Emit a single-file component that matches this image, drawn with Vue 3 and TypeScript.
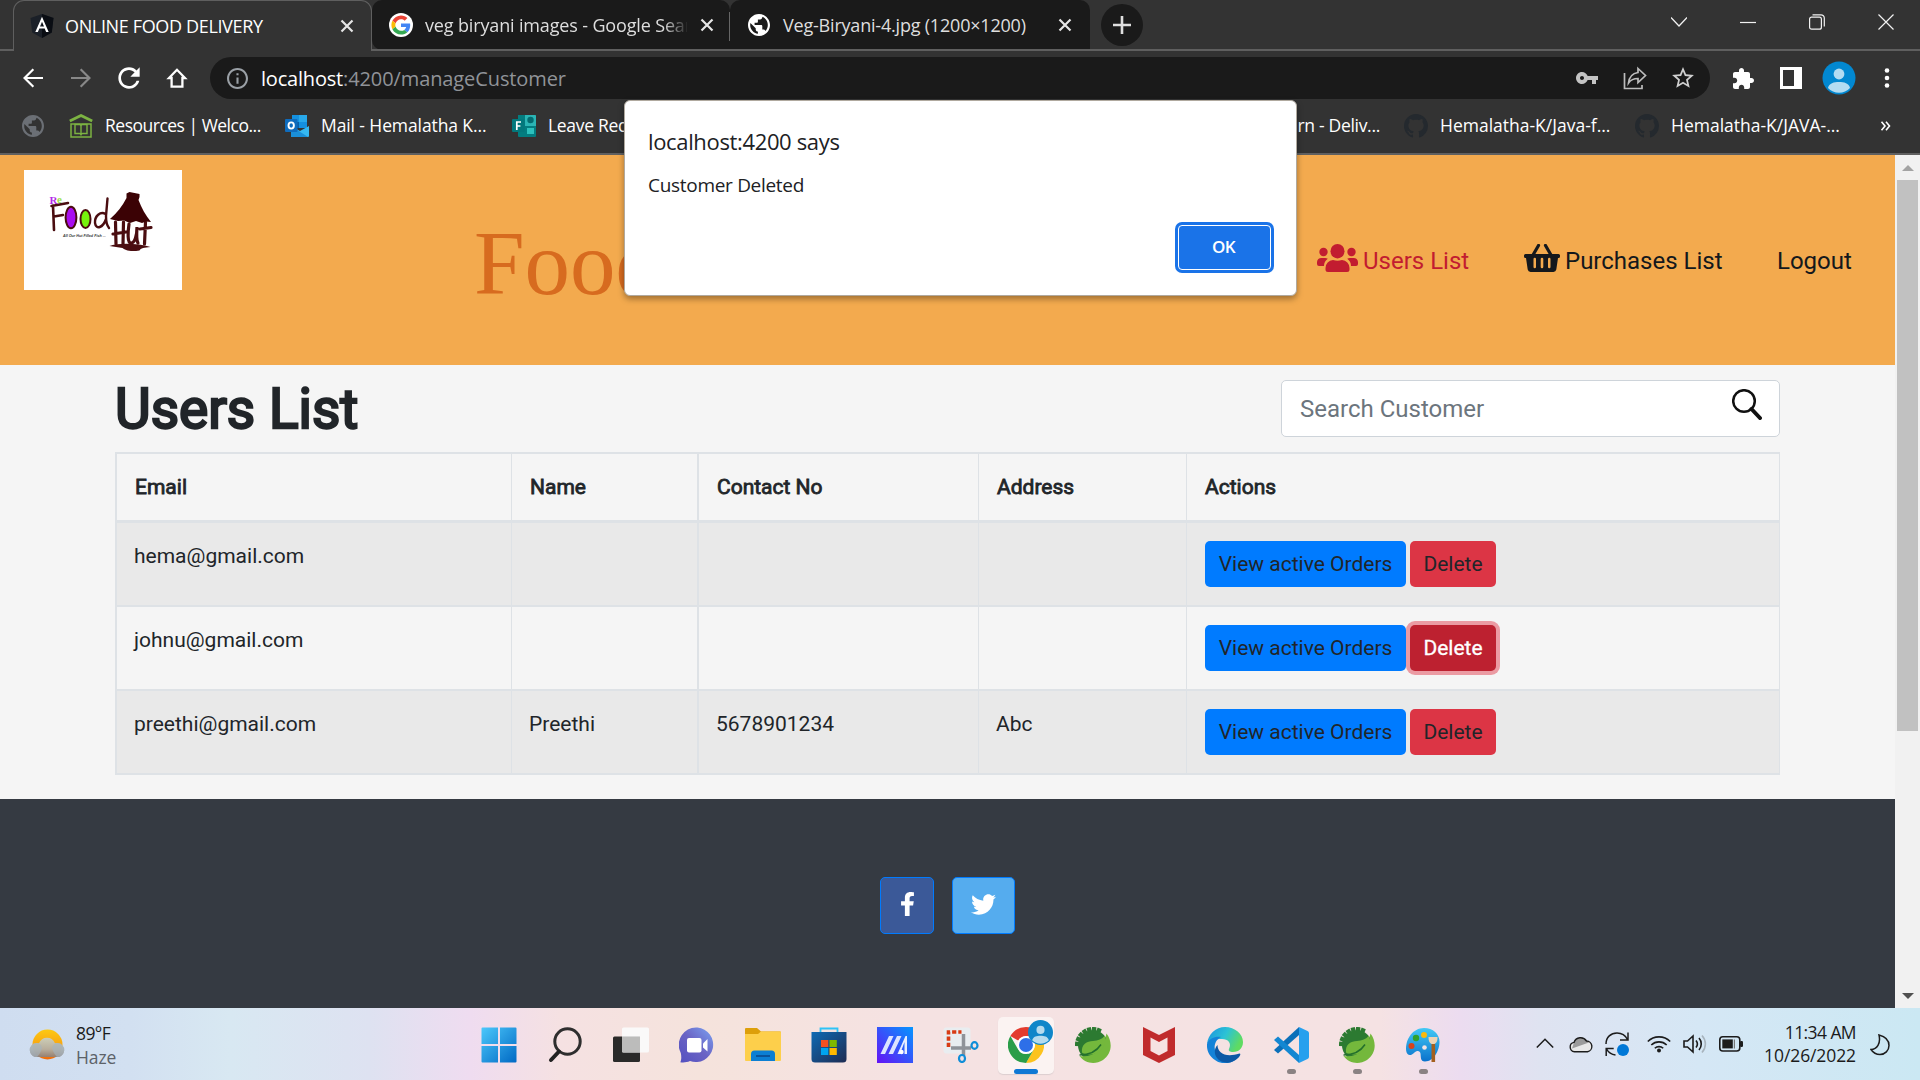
<script setup lang="ts">
interface Customer {
  email: string
  name: string
  contact: string
  address: string
  focused?: boolean
}

const columns: string[] = ['Email', 'Name', 'Contact No', 'Address', 'Actions']

const customers: Customer[] = [
  { email: 'hema@gmail.com', name: '', contact: '', address: '' },
  { email: 'johnu@gmail.com', name: '', contact: '', address: '', focused: true },
  { email: 'preethi@gmail.com', name: 'Preethi', contact: '5678901234', address: 'Abc' },
]

const globe =
  'M12 2C6.48 2 2 6.48 2 12s4.48 10 10 10 10-4.48 10-10S17.52 2 12 2zm-1 17.93c-3.95-.49-7-3.85-7-7.93 0-.62.08-1.21.21-1.79L9 15v1c0 1.1.9 2 2 2v1.93zm6.9-2.54c-.26-.81-1-1.39-1.9-1.39h-1v-3c0-.55-.45-1-1-1H8v-2h2c.55 0 1-.45 1-1V7h2c1.1 0 2-.9 2-2v-.41c2.93 1.19 5 4.06 5 7.41 0 2.08-.8 3.97-2.1 5.39z'
const github =
  'M8 0C3.58 0 0 3.58 0 8c0 3.54 2.29 6.53 5.47 7.59.4.07.55-.17.55-.38 0-.19-.01-.82-.01-1.49-2.01.37-2.53-.49-2.69-.94-.09-.23-.48-.94-.82-1.13-.28-.15-.68-.52-.01-.53.63-.01 1.08.58 1.23.82.72 1.21 1.87.87 2.33.66.07-.52.28-.87.51-1.07-1.78-.2-3.64-.89-3.64-3.95 0-.87.31-1.59.82-2.15-.08-.2-.36-1.02.08-2.12 0 0 .67-.21 2.2.82.64-.18 1.32-.27 2-.27s1.36.09 2 .27c1.53-1.04 2.2-.82 2.2-.82.44 1.1.16 1.92.08 2.12.51.56.82 1.27.82 2.15 0 3.07-1.87 3.75-3.65 3.95.29.25.54.73.54 1.48 0 1.07-.01 1.93-.01 2.2 0 .21.15.46.55.38A8.01 8.01 0 0 0 16 8c0-4.42-3.58-8-8-8z'
const teeth: number[] = [-86, -68, -50, -32, -14, 4, 22]
</script>

<template>
  <div class="screen">
    <!-- Tab strip -->
    <div class="tabs">
      <div class="tab active">
        <svg class="fav" viewBox="0 0 24 24"><path d="M12 0 23.5 4 21.8 18.5 12 24 2.2 18.5.5 4z" fill="#1b2028" /><path d="M12 0 23.5 4 21.8 18.5 12 24z" fill="#0a0d13" /><path d="M12 2.8 5.3 18h2.6l1.4-3.4h5.4L16.1 18h2.6zm0 5 2 4.8h-4z" fill="#fff" /></svg>
        <span class="tab-title t1">ONLINE FOOD DELIVERY</span>
        <svg class="x" viewBox="0 0 14 14"><path d="M1.5 1.5l11 11M12.5 1.5l-11 11" /></svg>
      </div>
      <div class="tab idle second">
        <svg class="fav" viewBox="0 0 24 24">
          <circle cx="12" cy="12" r="12" fill="#fff" />
          <g transform="translate(2.4 2.4) scale(.4)">
            <path fill="#EA4335" d="M24 9.5c3.54 0 6.71 1.22 9.21 3.6l6.85-6.85C35.9 2.38 30.47 0 24 0 14.62 0 6.51 5.38 2.56 13.22l7.98 6.19C12.43 13.72 17.74 9.5 24 9.5z" />
            <path fill="#4285F4" d="M46.98 24.55c0-1.57-.15-3.09-.38-4.55H24v9.02h12.94c-.58 2.96-2.26 5.48-4.78 7.18l7.73 6c4.51-4.18 7.09-10.36 7.09-17.65z" />
            <path fill="#FBBC05" d="M10.53 28.59c-.48-1.45-.76-2.99-.76-4.59s.27-3.14.76-4.59l-7.98-6.19C.92 16.46 0 20.12 0 24c0 3.88.92 7.54 2.56 10.78l7.97-6.19z" />
            <path fill="#34A853" d="M24 48c6.48 0 11.93-2.13 15.89-5.81l-7.73-6c-2.15 1.45-4.92 2.3-8.16 2.3-6.26 0-11.57-4.22-13.47-9.91l-7.98 6.19C6.51 42.62 14.62 48 24 48z" />
          </g>
        </svg>
        <span class="tab-title t2">veg biryani images - Google Sear</span>
        <svg class="x" viewBox="0 0 14 14"><path d="M1.5 1.5l11 11M12.5 1.5l-11 11" /></svg>
      </div>
      <div class="tab idle third">
        <svg class="fav" viewBox="0 0 24 24"><path :d="globe" fill="#fff" transform="translate(-1.2 -1.2) scale(1.1)" /></svg>
        <span class="tab-title t3">Veg-Biryani-4.jpg (1200×1200)</span>
        <svg class="x" viewBox="0 0 14 14"><path d="M1.5 1.5l11 11M12.5 1.5l-11 11" /></svg>
      </div>
      <div class="newtab"><svg viewBox="0 0 18 18"><path d="M9 0v18M0 9h18" stroke="#dedede" stroke-width="2.6" /></svg></div>
      <div class="win">
        <svg viewBox="0 0 16 16"><path d="M0 3.5l8 8.5 8-8.5" /></svg>
        <svg viewBox="0 0 16 16"><path d="M0 8.5h16" /></svg>
        <svg viewBox="0 0 16 16"><rect x=".6" y="3.2" width="11.8" height="12" rx="2" /><path d="M3.5 .8h8.5a3.3 3.3 0 0 1 3.3 3.3v8.4" /></svg>
        <svg viewBox="0 0 16 16"><path d="M.5.5l15 15M15.5.5l-15 15" /></svg>
      </div>
    </div>

    <!-- Address bar -->
    <div class="toolbar">
      <svg class="nav-i" viewBox="0 0 24 24"><path fill="#fff" d="M22 10.9H6.1l7-7L11.6 2.4 2 12l9.6 9.6 1.5-1.5-7-7H22z" /></svg>
      <svg class="nav-i" viewBox="0 0 24 24"><path fill="#888" d="M2 10.9h15.9l-7-7 1.5-1.5L22 12l-9.6 9.6-1.5-1.5 7-7H2z" /></svg>
      <svg class="nav-i" viewBox="3 3 18 18"><path fill="#fff" d="M17.65 6.35C16.2 4.9 14.21 4 12 4c-4.42 0-7.99 3.58-7.99 8s3.57 8 7.99 8c3.73 0 6.84-2.55 7.73-6h-2.08c-.82 2.33-3.04 4-5.65 4-3.31 0-6-2.69-6-6s2.69-6 6-6c1.66 0 3.14.69 4.22 1.78L13 11h7V4l-2.35 2.35z" /></svg>
      <svg class="nav-i" viewBox="0 0 24 24"><path fill="none" stroke="#fff" stroke-width="2.3" d="M12 3.8 4 12h2.6v8.6h10.8V12H20z" /></svg>
      <div class="omni">
        <svg class="info" viewBox="2 2 20 20"><path fill="#9aa0a6" d="M11 17h2v-6h-2v6zm1-15C6.48 2 2 6.48 2 12s4.48 10 10 10 10-4.48 10-10S17.52 2 12 2zm0 18c-4.41 0-8-3.59-8-8s3.59-8 8-8 8 3.59 8 8-3.59 8-8 8zM11 9h2V7h-2v2z" /></svg>
        <span class="url"><b>localhost</b>:4200/manageCustomer</span>
        <div class="omni-icons">
          <svg viewBox="0 0 24 24"><path fill="#c4c4c4" d="M12.65 10C11.83 7.67 9.61 6 7 6c-3.31 0-6 2.69-6 6s2.69 6 6 6c2.61 0 4.83-1.67 5.65-4H17v4h4v-4h2v-4H12.65zM7 14c-1.1 0-2-.9-2-2s.9-2 2-2 2 .9 2 2-.9 2-2 2z" /></svg>
          <svg viewBox="0 0 24 24"><path fill="none" stroke="#bdbdbd" stroke-width="1.7" d="M1.5 7v15.500H19V19M15 2.500l7.500 7-7.500 7v-4c-4 0-7 1-9.500 4.500.6-5.500 3.500-9.500 9.500-10.500z" /></svg>
          <svg viewBox="1 1 22 22"><path fill="#d0d0d0" d="M22 9.24l-7.19-.62L12 2 9.19 8.63 2 9.24l5.46 4.73L5.82 21 12 17.27 18.18 21l-1.63-7.03L22 9.24zM12 15.4l-3.76 2.27 1-4.28-3.32-2.88 4.38-.38L12 6.1l1.71 4.04 4.38.38-3.32 2.88 1 4.28L12 15.4z" /></svg>
        </div>
      </div>
      <svg class="ext" viewBox="1 0 23 23"><path fill="#fff" d="M20.5 11H19V7c0-1.1-.9-2-2-2h-4V3.5C13 2.12 11.88 1 10.5 1S8 2.12 8 3.5V5H4c-1.1 0-1.99.9-1.99 2v3.8H3.5c1.49 0 2.7 1.21 2.7 2.7s-1.21 2.7-2.7 2.7H2V20c0 1.1.9 2 2 2h3.8v-1.5c0-1.49 1.21-2.7 2.7-2.7 1.49 0 2.7 1.21 2.7 2.7V22H17c1.1 0 2-.9 2-2v-4h1.5c1.38 0 2.5-1.12 2.5-2.5S21.88 11 20.5 11z" /></svg>
      <svg class="panel" viewBox="0 0 22 22"><path fill="#fff" fill-rule="evenodd" d="M0 0h22v22H0zM3 3v16h11V3z" /></svg>
      <svg class="avatar" viewBox="0 0 34 34"><circle cx="17" cy="17" r="16.5" fill="#0288d1" /><circle cx="17" cy="13" r="5.4" fill="#b3dcf2" /><path d="M6 27c1-5 6-6 11-6s10 1 11 6a15 15 0 0 1-22 0z" fill="#b3dcf2" /></svg>
      <svg class="dots" viewBox="0 0 6 20" fill="#fff"><circle cx="3" cy="2.5" r="2.3" /><circle cx="3" cy="10" r="2.3" /><circle cx="3" cy="17.5" r="2.3" /></svg>
    </div>

    <!-- Bookmarks -->
    <div class="marks">
      <svg class="m-globe" viewBox="2 2 20 20"><path :d="globe" fill="#6b6f75" /></svg>
      <svg class="m-res" viewBox="0 0 24 24" fill="none" stroke="#7cb342"><path d="M.8 7 12 1.5 23.2 7" stroke-width="2.8" /><path d="M2 10v13h20V10z" stroke-width="1.5" /><path d="M6 10.500v9h4.500c1 0 1.500.7 1.500 2 0-1.300.5-2 1.500-2H18v-9h-4.500c-1 0-1.500.5-1.500 1.500 0-1-.5-1.500-1.500-1.500zM12 11.500v10" stroke-width="1.400" /></svg>
      <span class="mark r1">Resources | Welco...</span>
      <svg class="m-app" viewBox="0 0 24 24"><path d="M7 1h14a1 1 0 0 1 1 1v12H7z" fill="#1490df" /><path d="M14 1h8v7h-8z" fill="#28a8ea" /><path d="M7 8h7v6H7z" fill="#0a5ea8" /><path d="M6 12l9 5 9-5v10a1 1 0 0 1-1 1H7a1 1 0 0 1-1-1z" fill="#35b8f1" /><path d="M6 12l17 11H7a1 1 0 0 1-1-1z" fill="#1a8fd8" /><rect y="5" width="12.5" height="13" rx="1" fill="#0f6cbd" /><ellipse cx="6.2" cy="11.5" rx="2.7" ry="3.1" fill="none" stroke="#fff" stroke-width="1.9" /></svg>
      <span class="mark r2">Mail - Hemalatha K...</span>
      <svg class="m-app" viewBox="0 0 24 24"><path d="M6 1h17a1 1 0 0 1 1 1v20a1 1 0 0 1-1 1H7a1 1 0 0 1-1-1z" fill="#037d80" /><path d="M13 1h10a1 1 0 0 1 1 1v10H13z" fill="#2bb5b5" /><circle cx="18.5" cy="6" r="3.2" fill="#036c70" /><rect x="15" y="14" width="7" height="6" fill="#2cc1bd" /><rect y="5" width="12.5" height="13" rx="1" fill="#03787c" /><path d="M4.8 16V8H9M4.8 12h3.6" fill="none" stroke="#fff" stroke-width="1.7" /></svg>
      <span class="mark r3">Leave Req</span>
      <span class="mark r4">Learn - Deliv...</span>
      <svg class="m-git" viewBox="0 0 16 16"><path :d="github" fill="#24292e" /></svg>
      <span class="mark r5">Hemalatha-K/Java-f...</span>
      <svg class="m-git" viewBox="0 0 16 16"><path :d="github" fill="#24292e" /></svg>
      <span class="mark r6">Hemalatha-K/JAVA-...</span>
      <svg class="m-more" viewBox="0 0 10 10"><path d="M1 .8 4.5 5 1 9.2M5.5.8 9 5 5.5 9.2" fill="none" stroke="#fff" stroke-width="1.6" /></svg>
    </div>

    <!-- Page viewport -->
    <div class="viewport">
      <div class="page">
        <header class="header">
          <div class="logo">
            <svg viewBox="0 0 158 120">
              <text x="25.500" y="34" class="lg-s" fill="#b32be8">R</text>
              <text x="33" y="32.500" class="lg-s" fill="#9be34b">e</text>
              <g fill="none" stroke="#4a0d10" stroke-linecap="round">
                <path d="M29 35.500 30 60M27.500 36l16.500-3M30 46.500l9-1.500" stroke-width="2.600" />
                <ellipse cx="47" cy="47.500" rx="5.400" ry="10.800" fill="#a80df0" stroke-width="2" />
                <ellipse cx="61.500" cy="49" rx="5" ry="9" fill="#76f20c" stroke-width="2" />
                <path d="M81.500 44c-5-3-11 2-10.500 9 1 7 8 5 11-4M83.500 28.500 82 46c0 5 .5 9 3 12" stroke-width="2.400" />
                <path d="M91.500 52l.5 22M99.500 52l-.5 22M89 64l13-2M105 54c-1 7-2 19 2 19s6-8 6-16c-.5 8-.5 14 1 16M121.500 52l-1 22M116 59l11-1.500" stroke-width="3.200" />
              </g>
              <path d="M102.500 23.500l3-1.500 10 2v3l-1 3c3 8 7 15 12.500 22l-5-.5-4 1.500-6-2-6 2-6-2.500-6 .5-8-2c7-6 12.500-13 16.500-21z" fill="#3b0205" />
              <path d="M85.500 76c8-3 28-3 41 1-6 .5-10 1-11 3.500-10 1.500-15-.5-17-2.500z" fill="#4a0d10" />
              <text x="39" y="67" class="lg-t" fill="#333">All Our Hut Filled Fish ...</text>
            </svg>
          </div>
          <h2 class="brand">Food</h2>
          <nav class="menu">
            <a class="link red">
              <svg class="users" viewBox="0 0 41 28" fill="#c21c30"><ellipse cx="20.5" cy="7.2" rx="7" ry="7.2" /><circle cx="6.5" cy="8" r="4.2" /><circle cx="34.5" cy="8" r="4.2" /><path d="M0 20v-2a4.500 4.500 0 0 1 4.500-4H8a5 5 0 0 1 2.800.8A9 9 0 0 0 7 22H2a2 2 0 0 1-2-2zM41 20v-2a4.500 4.500 0 0 0-4.500-4H33a5 5 0 0 0-2.800.8A9 9 0 0 1 34 22h5a2 2 0 0 0 2-2zM8.500 24a8 8 0 0 1 7.500-8c3 1 6 1 9 0a8 8 0 0 1 7.500 8v1.500A2.500 2.500 0 0 1 30 28H11a2.500 2.500 0 0 1-2.500-2.500z" /></svg>
              <span class="n1">Users List</span>
            </a>
            <a class="link">
              <svg class="basket" viewBox="0 0 36 28"><path d="M9 11 14.500 1.500M27 11 21.500 1.500" stroke="#14181c" stroke-width="3.200" stroke-linecap="round" /><path fill="#14181c" fill-rule="evenodd" d="M1.500 10h33A1.500 1.500 0 0 1 36 11.500v1a1.500 1.500 0 0 1-1.500 1.500H34l-1.700 11.600A3 3 0 0 1 29.400 28H6.600a3 3 0 0 1-2.900-2.400L2 14h-.5A1.500 1.500 0 0 1 0 12.500v-1A1.500 1.500 0 0 1 1.500 10zM9.500 15v8a1 1 0 0 0 2.500 0v-8a1 1 0 0 0-2.500 0zM16.700 15v8a1 1 0 0 0 2.600 0v-8a1 1 0 0 0-2.600 0zM24 15v8a1 1 0 0 0 2.500 0v-8a1 1 0 0 0-2.500 0z" /></svg>
              <span class="n2">Purchases List</span>
            </a>
            <a class="link"><span class="n3">Logout</span></a>
          </nav>
        </header>

        <main class="main">
          <div class="top">
            <h1 class="title">Users List</h1>
            <div class="search">
              <span class="ph">Search Customer</span>
              <svg viewBox="0 0 30 31"><ellipse cx="12" cy="12" rx="10.8" ry="10.8" fill="none" stroke="#111" stroke-width="2.5" /><path d="M19.500 20l8.500 9" stroke="#111" stroke-width="4" stroke-linecap="round" /></svg>
            </div>
          </div>
          <div class="table">
            <div class="row head">
              <div v-for="c in columns" :key="c" class="cell"><span>{{ c }}</span></div>
            </div>
            <div v-for="(u, i) in customers" :key="u.email" class="row body" :class="{ odd: i % 2 === 0 }">
              <div class="cell">{{ u.email }}</div>
              <div class="cell">{{ u.name }}</div>
              <div class="cell">{{ u.contact }}</div>
              <div class="cell">{{ u.address }}</div>
              <div class="cell actions">
                <button class="btn view">View active Orders</button>
                <button class="btn del" :class="{ focused: u.focused }">Delete</button>
              </div>
            </div>
          </div>
        </main>

        <footer class="footer">
          <div class="soc fb"><svg viewBox="0 0 320 512"><path fill="#fff" d="M279.14 288l14.22-92.66h-88.91v-60.13c0-25.35 12.42-50.06 52.24-50.06h40.42V6.26S260.43 0 225.36 0c-73.22 0-121.08 44.38-121.08 124.72v70.62H22.89V288h81.39v224h100.17V288z" /></svg></div>
          <div class="soc tw"><svg viewBox="0 0 512 512"><path fill="#fff" d="M459.37 151.716c.325 4.548.325 9.097.325 13.645 0 138.72-105.583 298.558-298.558 298.558-59.452 0-114.68-17.219-161.137-47.106 8.447.974 16.568 1.299 25.34 1.299 49.055 0 94.213-16.568 130.274-44.832-46.132-.975-84.792-31.188-98.112-72.772 6.498.974 12.995 1.624 19.818 1.624 9.421 0 18.843-1.3 27.614-3.573-48.081-9.747-84.143-51.98-84.143-102.985v-1.299c13.969 7.797 30.214 12.67 47.431 13.319-28.264-18.843-46.781-51.005-46.781-87.391 0-19.492 5.197-37.36 14.294-52.954 51.655 63.675 129.3 105.258 216.365 109.807-1.624-7.797-2.599-15.918-2.599-24.04 0-57.828 46.782-104.934 104.934-104.934 30.213 0 57.502 12.67 76.67 33.137 23.715-4.548 46.456-13.32 66.599-25.34-7.798 24.366-24.366 44.833-46.132 57.827 21.117-2.273 41.584-8.122 60.426-16.243-14.292 20.791-32.161 39.308-52.628 54.253z" /></svg></div>
        </footer>
      </div>
      <div class="scroll">
        <svg class="arr" viewBox="0 0 12 6"><path d="M6 0l6 6H0z" fill="#a3a3a3" /></svg>
        <div class="thumb"></div>
        <svg class="arr down" viewBox="0 0 12 6"><path d="M6 6l6-6H0z" fill="#505050" /></svg>
      </div>
    </div>

    <!-- Windows taskbar -->
    <div class="taskbar">
      <div class="weather">
        <svg viewBox="0 0 36 32">
          <defs>
            <linearGradient id="sun" x1="0" y1="0" x2="0" y2="1"><stop offset="0" stop-color="#fdc912" /><stop offset=".6" stop-color="#f7a012" /><stop offset="1" stop-color="#ee6a0c" /></linearGradient>
            <linearGradient id="cld" x1="0" y1="0" x2="0" y2="1"><stop offset="0" stop-color="#c9cfc4" /><stop offset=".6" stop-color="#b3afa6" /><stop offset="1" stop-color="#8f8078" /></linearGradient>
          </defs>
          <circle cx="18.500" cy="15.500" r="15" fill="url(#sun)" />
          <path d="M8 28a7 7 0 0 1-.5-14c.8-.1 1.500 0 2.500.3a8.500 8.500 0 0 1 16 0c1-.3 1.700-.4 2.500-.3a7 7 0 0 1-.5 14z" fill="url(#cld)" opacity=".93" />
          <path d="M8 28a7 7 0 0 1-.5-14c3 0 5 2 5.500 5-1 4-3 7-5 9zM28 28a7 7 0 0 0 .5-14c-3 0-5 2-5.500 5 1 4 3 7 5 9z" fill="#a3b4c0" opacity=".6" />
        </svg>
        <div class="wx"><span>89°F</span><span class="haze">Haze</span></div>
      </div>

      <div class="apps">
        <div class="app">
          <svg viewBox="0 0 36 36"><defs><linearGradient id="wn" x1="0" y1="0" x2="1" y2="1"><stop offset="0" stop-color="#4cc8fb" /><stop offset="1" stop-color="#0069c4" /></linearGradient></defs><path fill="url(#wn)" d="M1.500.5H17v16.500H.5V1.500a1 1 0 0 1 1-1zM19 .5h15.500a1 1 0 0 1 1 1V17H19zM.5 19H17v16.500H1.500a1 1 0 0 1-1-1zM19 19h16.500v15.500a1 1 0 0 1-1 1H19z" /></svg>
        </div>
        <div class="app">
          <svg viewBox="0 0 36 36"><circle cx="20.500" cy="14.500" r="12.700" fill="none" stroke="#2e2e2e" stroke-width="3" /><path d="M12 24.500 4 33" stroke="#222" stroke-width="4" stroke-linecap="round" /></svg>
        </div>
        <div class="app">
          <svg viewBox="0 0 36 36"><rect y="9.500" width="27" height="25.500" rx="1.500" fill="#2a2a29" /><rect x="9" y=".5" width="27" height="25" rx="1.500" fill="#fafafa" opacity=".95" /><path d="M9 9.500h18v16H10.500a1.500 1.500 0 0 1-1.500-1.500z" fill="#bcbcbb" /></svg>
        </div>
        <div class="app">
          <svg viewBox="0 0 36 36"><defs><linearGradient id="ch" x1="0" y1="1" x2="1" y2="0"><stop offset="0" stop-color="#5350c0" /><stop offset=".5" stop-color="#6a63c4" /><stop offset="1" stop-color="#7ba3f2" /></linearGradient></defs><path d="M18.500.5A17.300 17.300 0 1 1 11 34c-3 1.500-7 1.700-9.700 1.200C2.500 33 2.500 29 1.800 26A17.500 17.500 0 0 1 18.500.5z" fill="url(#ch)" /><rect x="8" y="11" width="14.500" height="14.500" rx="2" fill="#fff" /><path d="M24 16.500 28.500 12v12.500L24 20.500z" fill="#fff" /></svg>
        </div>
        <div class="app">
          <svg viewBox="0 0 36 36"><path d="M0 2a1 1 0 0 1 1-1h11l4 3.500H35a1 1 0 0 1 1 1V12H0z" fill="#dd9f0a" /><path d="M0 7h13l3-2.500h19a1 1 0 0 1 1 1V33a1 1 0 0 1-1 1H1a1 1 0 0 1-1-1z" fill="#fdcf4b" /><path d="M6 34V27a3.500 3.500 0 0 1 3.500-3.500h17A3.500 3.500 0 0 1 30 27v7z" fill="#0c7fd3" /><path d="M11 29h14" stroke="#0b4f93" stroke-width="1.800" /></svg>
        </div>
        <div class="app">
          <svg viewBox="0 0 36 36"><defs><linearGradient id="st" x1="0" y1="0" x2="1" y2="1"><stop offset="0" stop-color="#0f6ab4" /><stop offset="1" stop-color="#1e2c52" /></linearGradient></defs><path d="M9.500 7V1.500h17V7" fill="none" stroke="#2ec3f6" stroke-width="1.800" /><path d="M.5 5h35v27a3.500 3.500 0 0 1-3.500 3.500H4A3.500 3.500 0 0 1 .5 32z" fill="url(#st)" /><path fill="#f25022" d="M10 13h7.300v7H10z" /><path fill="#7fba00" d="M18.500 13h7.300v7h-7.300z" /><path fill="#00a4ef" d="M10 21h7.300v7H10z" /><path fill="#ffb900" d="M18.500 21h7.300v7h-7.300z" /></svg>
        </div>
        <div class="app">
          <svg viewBox="0 0 36 36"><defs><linearGradient id="my" x1="0" y1="1" x2="1" y2="0"><stop offset="0" stop-color="#6412f5" /><stop offset="1" stop-color="#0596ff" /></linearGradient></defs><path d="M0 0h36v36H0z" fill="url(#my)" /><path d="M3.500 27 12 9h4.500L8 27zM11.500 27 20 9h4.500L16 27z" fill="#dbe4ff" /><path d="M20.500 27 28.500 9H30v18h-2.500V15L23 27z" fill="#e8eeff" /><circle cx="24.500" cy="25" r="2.200" fill="#fff" /></svg>
        </div>
        <div class="app">
          <svg viewBox="0 0 36 36"><rect x=".5" y=".5" width="27" height="26" rx="3" fill="#e9edf0" /><path d="M5.500 20V5h13" fill="none" stroke="#d83b14" stroke-width="3.600" stroke-dasharray="4.200 2" /><path d="M20.500 7v22M8 21h20" stroke="#8f9399" stroke-width="3.500" /><ellipse cx="19" cy="31.500" rx="3" ry="3.500" fill="none" stroke="#0f8ed8" stroke-width="2.200" /><ellipse cx="31.500" cy="18.500" rx="3" ry="3.300" fill="none" stroke="#0f8ed8" stroke-width="2.200" /></svg>
        </div>
        <div class="app current">
          <svg viewBox="0 0 36 36"><path fill="#e33b2e" d="M18 0a18 18 0 0 1 15.600 9H18a9 9 0 0 0-7.800 4.500L2.400 9A18 18 0 0 1 18 0z" /><path fill="#fcc31e" d="M33.600 9A18 18 0 0 1 18 36l7.800-13.500A9 9 0 0 0 25.800 13.500L24 9z" /><path fill="#2a9d49" d="M2.400 9l7.800 13.500A9 9 0 0 0 20 26.800L18 36A18 18 0 0 1 2.400 9z" /><path fill="#2a9d49" d="M18 27a9 9 0 0 0 7.800-4.500L18 36z" /><circle cx="18" cy="18" r="8.800" fill="#fff" /><circle cx="18" cy="18" r="7" fill="#2d6fe8" /></svg>
          <svg class="badge" viewBox="0 0 24 24"><circle cx="12" cy="12" r="12" fill="#0f86c9" /><circle cx="12" cy="9.500" r="3.900" fill="#b5dbee" /><path d="M4 19.500c1-4 4.500-4.500 8-4.500s7 .5 8 4.500a11.500 11.500 0 0 1-16 0z" fill="#b5dbee" /></svg>
          <i class="pill"></i>
        </div>
        <div class="app">
          <svg viewBox="0 0 36 36"><rect v-for="a in teeth" :key="a" x="15.800" y="0" width="4.400" height="6" fill="#2c7a31" :transform="`rotate(${a} 18 18)`" /><circle cx="18" cy="18.300" r="15" fill="#2c7a31" /><path d="M31.500 6.500C38 15 37 27 28 33c-8 5-18 3.500-23.500-4C18 31 29 23 31.500 6.500z" fill="#74b83c" /><path d="M30 8.500c2 12-6 20-17.500 19-2.500-.2-4.500-1-5.500-2C6 17 12 14.500 18 14c5-.5 9-1.500 12-5.500z" fill="#74b83c" /><path d="M4.500 28c9 0 17-3.500 21.500-10.500" fill="none" stroke="#23702c" stroke-width="1.500" /></svg>
        </div>
        <div class="app">
          <svg viewBox="0 0 36 36"><path d="M2 0l16 8 16-8v28l-16 8-16-8z" fill="#c02b2c" /><path d="M9.500 10.500 18 15l8.500-4.500V24L18 28.500 9.500 24z" fill="#f6e2e2" /></svg>
        </div>
        <div class="app">
          <svg viewBox="0 0 36 36"><defs><linearGradient id="ed" x1="0" y1="0" x2="1" y2=".4"><stop offset="0" stop-color="#1a8fe0" /><stop offset=".55" stop-color="#2cc3d5" /><stop offset="1" stop-color="#5fdb62" /></linearGradient></defs><path d="M0 17C1 7 9 0 18 0c10 0 18 7 18 15 0 6-4 10-10 10-3 0-5-1-4-3 3-6-1-10-7-10C8 12 2 14 0 17z" fill="url(#ed)" /><path d="M0 17c2-6 9-8 14-7-6 3-8 10-5 16 4 7 13 9 20 6-6 6-16 5-21 1C2 29-.5 23 0 17z" fill="#1482d8" /><path d="M10.500 18c0 8 8 13 22 8.500 1 0 1 1 .5 2C28 37 15 38 10 31c-3-4-3-9 .5-13z" fill="#0c58a5" /></svg>
        </div>
        <div class="app">
          <svg viewBox="0 0 36 36"><path d="M26 0v8L5 26.500 1 23z" fill="#0b70b9" /><path d="M26 36v-8L5 9.500 1 13z" fill="#1387d2" /><path d="M26 0l8.500 4A2.500 2.500 0 0 1 36 6v24a2.500 2.500 0 0 1-1.500 2L26 36z" fill="#27a0ee" /></svg>
          <i class="dot"></i>
        </div>
        <div class="app">
          <svg viewBox="0 0 36 36"><rect v-for="a in teeth" :key="a" x="15.800" y="0" width="4.400" height="6" fill="#2c7a31" :transform="`rotate(${a} 18 18)`" /><circle cx="18" cy="18.300" r="15" fill="#2c7a31" /><path d="M31.500 6.500C38 15 37 27 28 33c-8 5-18 3.500-23.500-4C18 31 29 23 31.500 6.500z" fill="#74b83c" /><path d="M30 8.500c2 12-6 20-17.500 19-2.500-.2-4.500-1-5.500-2C6 17 12 14.500 18 14c5-.5 9-1.500 12-5.500z" fill="#74b83c" /><path d="M4.500 28c9 0 17-3.500 21.500-10.500" fill="none" stroke="#23702c" stroke-width="1.500" /></svg>
          <i class="dot"></i>
        </div>
        <div class="app">
          <svg viewBox="0 0 36 36"><defs><linearGradient id="pt" x1="0" y1="0" x2="0" y2="1"><stop offset="0" stop-color="#43c9f5" /><stop offset="1" stop-color="#0a72cc" /></linearGradient></defs><path d="M19 1c9 0 15.500 6 15.500 14S29 34.500 20 34.500c-5 0-4-5-4.500-8S12 23 9 26s-7 3-7.800-2C0 12 8 1 19 1z" fill="url(#pt)" /><circle cx="19" cy="8" r="3" fill="#fbb90d" /><circle cx="11" cy="11" r="3.200" fill="#2fa12c" /><circle cx="6.500" cy="19" r="3" fill="#d8431c" /><circle cx="19.500" cy="20.500" r="2.300" fill="#f3e3e4" /><path d="M26.500 14h3.600v21h-3.600z" fill="#a4601f" /><path d="M23.500 10h9c0 4-1 6-3 7h-3c-2-1-3-3-3-7z" fill="#ecd3b5" /></svg>
          <i class="dot"></i>
        </div>
      </div>

      <div class="tray">
        <svg class="i-up" viewBox="0 0 18 10"><path d="M.8 9.500 9 1.200l8.200 8.300" fill="none" stroke="#1c1c1c" stroke-width="1.500" /></svg>
        <svg class="i-cloud" viewBox="0 0 24 16"><path d="M5.500 15.200a4.700 4.700 0 0 1-.5-9.300A7 7 0 0 1 17.500 4.500a5.400 5.400 0 0 1 1 10.700z" fill="#e8e8e8" /><path d="M5 6a7 7 0 0 1 12.500-1.500L20 6 3 12z" fill="#9b9b9b" /><path d="M5.500 15.200a4.700 4.700 0 0 1-.5-9.300A7 7 0 0 1 17.500 4.500a5.400 5.400 0 0 1 1 10.700z" fill="none" stroke="#1c1c1c" stroke-width="1.400" /></svg>
        <svg class="i-sync" viewBox="0 0 24 24"><path d="M1 12C1 5 6 1 12 1c4.500 0 8.500 2.500 10.500 6.500M23 .5V8h-8M1.200 24v-7.500h7.500M1.500 17c2 3.500 5 5.500 9 6" fill="none" stroke="#1c1c1c" stroke-width="1.500" /><circle cx="18" cy="18" r="6" fill="#0078d7" /></svg>
        <svg class="i-wifi" viewBox="0 0 24 18"><g fill="none" stroke="#1c1c1c" stroke-width="1.600"><path d="M.8 6.500a15.800 15.800 0 0 1 22.400 0M4.300 10a11 11 0 0 1 15.400 0M7.800 13.300a6 6 0 0 1 8.400 0" /></g><circle cx="12" cy="15.500" r="2" fill="#1c1c1c" /></svg>
        <svg class="i-vol" viewBox="0 0 24 20"><g fill="none" stroke="#1c1c1c" stroke-width="1.600"><path d="M1 7v6h3.500l5.500 5V2L4.500 7zM13 6.500c1.600 2 1.600 5 0 7M16 4c3 3.500 3 8.500 0 12" /><path d="M19 1.500c4.500 5 4.500 12 0 17" stroke="#a8b4bd" /></g></svg>
        <svg class="i-bat" viewBox="0 0 24 16"><rect x=".8" y=".8" width="20" height="14.200" rx="3" fill="none" stroke="#1c1c1c" stroke-width="1.600" /><rect x="3.300" y="3.400" width="10.500" height="9" fill="#1c1c1c" /><path d="M14.800 3.400h1.200v9h-1.200z" fill="#777" /><rect x="21" y="5" width="3" height="6" rx="1.200" fill="#1c1c1c" /></svg>
        <div class="clock"><span class="tm">11:34 AM</span><span class="dt">10/26/2022</span></div>
        <svg class="i-moon" viewBox="0 0 20 22"><path d="M9 1c6 1.500 10 5.500 10 10.500 0 5-4 9-9 9-4 0-7-2-9-5 6 0 10-6 8-14.500z" fill="none" stroke="#1c1c1c" stroke-width="1.500" /></svg>
      </div>
    </div>

    <!-- Alert dialog -->
    <div class="dialog">
      <p class="d-title">localhost:4200 says</p>
      <p class="d-text">Customer Deleted</p>
      <button class="ok"><span>OK</span></button>
    </div>
  </div>
</template>

<style>
body { margin: 0; overflow: hidden; }
</style>

<style scoped>
* { box-sizing: border-box; }
svg { display: block; flex: none; }
p, h1, h2 { margin: 0; font-weight: 400; }
.screen { position: relative; width: 1920px; height: 1080px; display: flex; flex-direction: column; overflow: hidden; background: #333; font-family: "Open Sans", "Noto Sans", sans-serif; }

.tabs { height: 51px; flex: none; display: flex; padding-left: 13px; background: linear-gradient(#5f5f5f, #5f5f5f) 0 49px / 100% 2px no-repeat, #333; }
.tab { display: flex; align-items: center; height: 50px; }
.tab.active { width: 359px; height: 51px; border: 1px solid #5f5f5f; border-bottom: 0; border-radius: 11px 11px 0 0; background: #333; padding: 0 15px 0 16px; }
.tab.idle { height: 50px; background: linear-gradient(#5f5f5f, #5f5f5f) 0 49px / 100% 1px no-repeat, #1a1a1a; color: #dedede; }
.second { width: 358px; border-radius: 10px 10px 0 10px; padding-left: 17px; position: relative; }
.second::after { content: ""; position: absolute; right: 0; top: 12px; width: 1px; height: 29px; background: #666; }
.third { width: 360px; border-radius: 10px 10px 0 0; padding-left: 17px; }
.fav { width: 24px; height: 24px; }
.tab-title { font-size: 18px; line-height: 24px; white-space: nowrap; color: #fff; margin-left: 11px; padding-bottom: 0; }
.idle .tab-title { color: #dedede; }
.t1 { width: 275px; letter-spacing: -.35px; margin-top: -1px; }
.idle .t2 { width: 262px; margin-left: 12px; overflow: visible; letter-spacing: -.15px; -webkit-mask: linear-gradient(90deg, #000 238px, transparent 264px); mask: linear-gradient(90deg, #000 238px, transparent 264px); }
.t2 + .x { margin-left: 13px; }
.t3 { width: 276px; letter-spacing: -.2px; }
.idle .t3 { margin-left: 12px; width: 275px; }
.x { width: 14px; height: 14px; fill: none; stroke: #e6e6e6; stroke-width: 2.2; }
.newtab { width: 42px; height: 42px; margin: 4px 0 0 11px; border-radius: 50%; background: #1a1a1a; display: flex; align-items: center; justify-content: center; }
.newtab svg { width: 18px; height: 18px; }
.win { margin-left: auto; display: flex; gap: 53px; padding: 14px 26px 0 0; }
.win svg { width: 16px; height: 16px; fill: none; stroke: #f2f2f2; stroke-width: 1.2; }

.toolbar { height: 54px; flex: none; display: flex; align-items: center; padding-left: 21px; }
.nav-i { width: 24px; height: 24px; margin-right: 24px; }
.omni { width: 1500px; height: 42px; margin-left: -3px; border-radius: 21px; background: #1a1a1a; display: flex; align-items: center; padding: 0 15px 0 17px; }
.info { width: 21px; height: 21px; }
.url { margin: 2px 0 0 13px; font-size: 20px; line-height: 28px; color: #909398; letter-spacing: -.1px; }
.url b { font-weight: 400; color: #fff; letter-spacing: -.2px; }
.omni-icons { margin-left: auto; display: flex; gap: 24px; }
.omni-icons svg { width: 24px; height: 24px; }
.ext { width: 23px; height: 23px; margin-left: 22px; }
.panel { width: 22px; height: 22px; margin-left: 25px; }
.avatar { width: 34px; height: 34px; margin-left: 20px; }
.dots { width: 6px; height: 20px; margin-left: 28px; }

.marks { height: 50px; flex: none; display: flex; align-items: center; padding: 0 0 6px 22px; border-bottom: 2px solid #606060; }
.mark { color: #fff; font-size: 17.500px; line-height: 24px; white-space: nowrap; letter-spacing: -.3px; margin-top: -2px; }
.m-globe { width: 22px; height: 22px; }
.m-res { width: 24px; height: 24px; margin: 0 12px 0 25px; }
.m-app { width: 24px; height: 24px; margin-right: 12px; }
.m-git { width: 24px; height: 24px; margin-right: 12px; }
.r1 { width: 180px; letter-spacing: -.5px; }
.r2 { width: 191px; letter-spacing: -.1px; }
.r3 { width: 200px; }
.r4 { width: 632px; text-align: right; margin-right: 24px; }
.r5 { width: 195px; letter-spacing: 0; }
.r6 { width: 209px; letter-spacing: 0; }
.m-more { width: 11px; height: 10px; }

.viewport { height: 853px; flex: none; display: flex; }
.page { width: 1895px; display: flex; flex-direction: column; background: #f5f5f5; font-family: Roboto, sans-serif; color: #212529; }
.header { height: 210px; background: #f3aa4e; display: flex; padding: 15px 43px 0 24px; }
.logo { width: 158px; height: 120px; background: #fff; }
.logo svg { width: 158px; height: 120px; }
.lg-s { font: bold 11px "Liberation Serif", serif; }
.lg-t { font: italic bold 3.700px "Liberation Sans", sans-serif; }
.brand { margin: 42px 0 0 292px; font-family: "Liberation Serif", serif; font-size: 91px; line-height: 104px; height: 104px; color: #d76b1f; white-space: nowrap; }
.menu { margin-left: auto; display: flex; height: 180px; padding-top: 1px; align-items: center; }
.link { display: flex; align-items: center; font-size: 24px; line-height: 38px; color: #14181c; white-space: nowrap; }
.link svg { margin-top: -5px; }
.link.red { color: #c21c30; }
.users { width: 41px; height: 28px; margin-right: 5px; }
.basket { width: 36px; height: 28px; margin-right: 5px; }
.n1 { width: 161px; }
.n2 { width: 212px; }
.n3 { width: 75px; }

.main { height: 434px; padding: 15px 115px 0; }
.top { display: flex; justify-content: space-between; height: 72px; }
.title { font-size: 55px; line-height: 58px; -webkit-text-stroke: 2.4px #212529; }
.search { width: 499px; height: 57px; border: 1px solid #ced4da; border-radius: 5px; background: #fff; display: flex; justify-content: space-between; padding: 8px 17px 0 18px; }
.search svg { width: 30px; height: 31px; }
.ph { font-size: 24px; line-height: 41px; color: #6c757d; }
.table { border: 2px solid #dee2e6; border-width: 2px 1px 0 2px; font-size: 21px; }
.row { display: grid; grid-template-columns: 395px 187px 280px 208px 1fr; }
.cell { border-right: 1px solid #dee2e6; padding: 15px 0 0 17px; line-height: 30px; white-space: nowrap; }
.cell:nth-child(2) { border-right-width: 2px; }
.cell:last-child { border-right: 0; }
.head { height: 69px; border-bottom: 3px solid #dee2e6; }
.head .cell { padding: 18px 0 0 18px; -webkit-text-stroke: .8px #212529; }
.body { height: 84px; border-bottom: 2px solid #dee2e6; }
.body .cell { padding-top: 18px; }
.odd { background: #e9e9e9; }
.body .actions { display: flex; gap: 4px; padding: 18px 0 0 18px; }
.btn { height: 46px; border: 0; border-radius: 5px; padding: 0; font: 21px/46px Roboto, sans-serif; color: #212529; text-align: center; }
.view { width: 201px; background: #007bff; }
.del { width: 86px; background: #dc3545; }
.focused { background: #bd2130; color: #fff; box-shadow: 0 0 0 4px #eb9ba3; -webkit-text-stroke: .3px #fff; }

.footer { height: 209px; background: #353a42; display: flex; justify-content: center; gap: 18px; padding-top: 78px; }
.soc { height: 57px; border: 1px solid #007bff; border-radius: 5px; display: flex; align-items: center; justify-content: center; padding-bottom: 3px; }
.fb { width: 54px; background: #3b5998; }
.fb svg { width: 15px; height: 24px; }
.tw { width: 63px; background: #55acee; }
.tw svg { width: 25px; height: 25px; }

.scroll { width: 25px; background: #f1f1f1; display: flex; flex-direction: column; align-items: center; padding-top: 10px; }
.arr { width: 12px; height: 6px; }
.thumb { width: 21px; height: 551px; margin-top: 9px; background: #c1c1c1; }
.down { margin: auto 0 9px; }

.taskbar { height: 72px; flex: none; display: flex; background: linear-gradient(90deg, #cfddf0 0, #d2e0f1 130px, #d8e8f2 230px, #dee2f1 370px, #efdcf0 470px, #f5e1e2 560px, #f5e3dc 700px, #f5e2e2 900px, #f5e2e3 1380px, #ecdcf0 1460px, #dfe3f1 1540px, #d5e7f5 1700px, #cbe8f3 1920px); color: #1b1b1b; }
.weather { width: 466px; display: flex; padding: 20px 0 0 29px; }
.weather svg { width: 36px; height: 32px; margin-top: 1px; }
.wx { display: flex; flex-direction: column; margin-left: 11px; font-size: 17.500px; line-height: 24px; letter-spacing: -.6px; margin-top: -7px; }
.haze { color: #5c6268; letter-spacing: -.1px; }
.apps { display: flex; }
.app { width: 66px; height: 72px; display: flex; justify-content: center; padding-top: 19px; position: relative; }
.app > svg { width: 36px; height: 36px; }
.current { width: 56px; height: 57px; margin: 9px 6px 0 4px; padding: 10px 0 0; background: #fbf3f2; border-radius: 5px; box-shadow: 0 1px 1px #dccfd0; }
.current .badge { position: absolute; width: 25px; height: 25px; left: 30px; top: 3px; }
.pill { position: absolute; left: 16px; bottom: 0; width: 24px; height: 5px; border-radius: 3px; background: #0f78d4; }
.dot { position: absolute; left: 29px; top: 61px; width: 9px; height: 5px; border-radius: 3px; background: #8a8283; }
.tray { display: flex; align-items: flex-start; padding-left: 80px; }
.i-up { width: 18px; height: 10px; margin-top: 30px; }
.i-cloud { width: 24px; height: 17px; margin: 28px 0 0 15px; }
.i-sync { width: 24px; height: 24px; margin: 24px 0 0 12px; }
.i-wifi { width: 24px; height: 18px; margin: 27px 0 0 18px; }
.i-vol { width: 24px; height: 20px; margin: 26px 0 0 12px; }
.i-bat { width: 24px; height: 16px; margin: 28px 0 0 12px; }
.clock { width: 113px; display: flex; flex-direction: column; align-items: flex-end; font-size: 17.500px; line-height: 23px; padding-top: 13px; }
.tm { letter-spacing: -.6px; }
.dt { letter-spacing: -.1px; }
.i-moon { width: 20px; height: 22px; margin: 26px 0 0 14px; }

.dialog { position: absolute; left: 624px; top: 100px; width: 673px; height: 196px; border: 1px solid #b0a99f; border-radius: 6px; background: #fff; box-shadow: 0 3px 6px rgba(0, 0, 0, .35); padding: 24px 22px 0 23px; color: #202124; display: flex; flex-direction: column; }
.d-title { font-size: 22px; line-height: 32px; letter-spacing: -.35px; }
.d-text { margin-top: 14px; font-size: 19px; line-height: 28px; letter-spacing: -.3px; }
.ok { align-self: flex-end; margin-top: 23px; width: 99px; height: 51px; padding: 3px; border: 0; border-radius: 7px; background: #1a73e8; }
.ok span { display: block; height: 45px; border: 1.500px solid #fff; border-radius: 4px; font: 600 17px/42px "Open Sans", sans-serif; color: #fff; letter-spacing: -.5px; padding-right: 2px; }
</style>
